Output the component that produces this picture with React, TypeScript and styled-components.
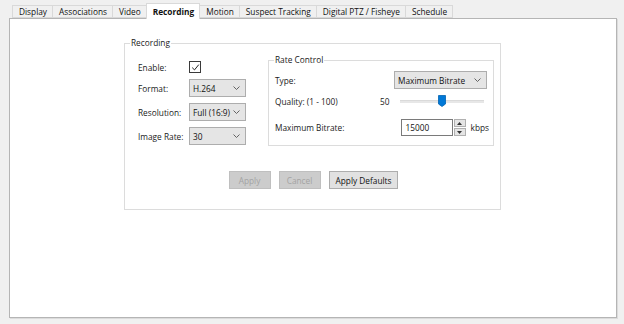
// Camera settings dialog - Recording tab

import { createGlobalStyle } from "styled-components";
import styled from "styled-components";

const GlobalStyle = createGlobalStyle`
  html, body {
    margin: 0;
    padding: 0;
    background: #f0f0f0;
  }
  body {
    font-family: "Open Sans", "Noto Sans", sans-serif;
    font-size: 8.3px;
    color: #1a1a1a;
  }
`;

const tabs = [
  "Display",
  "Associations",
  "Video",
  "Recording",
  "Motion",
  "Suspect Tracking",
  "Digital PTZ / Fisheye",
  "Schedule",
];

function Chevron() {
  return (
    <svg width="7" height="4" viewBox="0 0 7 4">
      <path d="M0.5 0.5 L3.5 3.5 L6.5 0.5" fill="none" stroke="#555" strokeWidth="0.9" />
    </svg>
  );
}

function Dropdown({ value, width }: { value: string; width: number }) {
  return (
    <Select $w={width}>
      <span>{value}</span>
      <Chevron />
    </Select>
  );
}

export default function App() {
  const active = "Recording";
  return (
    <Window>
      <GlobalStyle />
      <TabBar>
        {tabs.map((t) => (
          <Tab key={t} $active={t === active}>
            {t}
          </Tab>
        ))}
      </TabBar>
      <Panel>
        <Group $w={377}>
          <Legend $shift={-8}>Recording</Legend>
          <GroupBody>
            <FormGrid>
              <Label>Enable:</Label>
              <CheckBox>
                <svg width="9" height="9" viewBox="0 0 9 9">
                  <path d="M1.2 4.6 L3.5 6.9 L7.8 1.6" fill="none" stroke="#222" strokeWidth="1" />
                </svg>
              </CheckBox>
              <Label>Format:</Label>
              <Dropdown value="H.264" width={57} />
              <Label>Resolution:</Label>
              <Dropdown value="Full (16:9)" width={57} />
              <Label>Image Rate:</Label>
              <Dropdown value="30" width={57} />
            </FormGrid>
            <RateGroup $w={226}>
              <Legend $shift={-1}>Rate Control</Legend>
              <RateRow>
                <Label>Type:</Label>
                <Dropdown value="Maximum Bitrate" width={93} />
              </RateRow>
              <RateRow $gap={6}>
                <Label>Quality: (1 - 100)</Label>
                <SliderWrap>
                  <Value>50</Value>
                  <Track>
                    <Thumb style={{ left: `${(50 / 100) * 84 - 4}px` }}>
                      <svg width="8" height="12" viewBox="0 0 8 12">
                        <path d="M0.5 0.5 H7.5 V9 L4 11.5 L0.5 9 Z" fill="#0078d7" stroke="#0063b1" strokeWidth="0.8" />
                      </svg>
                    </Thumb>
                  </Track>
                </SliderWrap>
              </RateRow>
              <RateRow $gap={12}>
                <Label>Maximum Bitrate:</Label>
                <SpinWrap>
                  <NumberBox>15000</NumberBox>
                  <Spinner>
                    <SpinBtn>
                      <svg width="5" height="3" viewBox="0 0 5 3">
                        <path d="M0 3 L2.5 0 L5 3 Z" fill="#333" />
                      </svg>
                    </SpinBtn>
                    <SpinBtn>
                      <svg width="5" height="3" viewBox="0 0 5 3">
                        <path d="M0 0 L2.5 3 L5 0 Z" fill="#333" />
                      </svg>
                    </SpinBtn>
                  </Spinner>
                  <Unit>kbps</Unit>
                </SpinWrap>
              </RateRow>
            </RateGroup>
          </GroupBody>
          <ButtonRow>
            <Button disabled>Apply</Button>
            <Button disabled>Cancel</Button>
            <Button>Apply Defaults</Button>
          </ButtonRow>
        </Group>
      </Panel>
    </Window>
  );
}

const Window = styled.div`
  width: 624px;
  height: 324px;
  box-sizing: border-box;
  padding: 5px 0 0 9px;
`;

const TabBar = styled.div`
  display: flex;
  align-items: flex-end;
  height: 13px;
  margin-left: 4px;
  position: relative;
  z-index: 1;
`;

const Tab = styled.div<{ $active?: boolean }>`
  box-sizing: border-box;
  height: ${(p) => (p.$active ? "16px" : "13px")};
  margin-bottom: ${(p) => (p.$active ? "-1px" : "0")};
  padding: 0 5px ${(p) => (p.$active ? "1px" : "0")} 6px;
  margin-left: -1px;
  border: 1px solid #d9d9d9;
  border-bottom: ${(p) => (p.$active ? "none" : "1px solid #d9d9d9")};
  background: ${(p) => (p.$active ? "#ffffff" : "#f0f0f0")};
  font-weight: ${(p) => (p.$active ? 700 : 400)};
  color: #111;
  line-height: 11px;
  white-space: nowrap;
  display: flex;
  align-items: center;
`;

const Panel = styled.div`
  box-sizing: border-box;
  width: 608px;
  height: 300px;
  background: #ffffff;
  border: 1px solid #b5b5b5;
  box-shadow: 1px 1px 0 #dcdcdc;
  padding: 18px 0 0 114px;
`;

const Group = styled.fieldset<{ $w: number }>`
  box-sizing: border-box;
  width: ${(p) => p.$w}px;
  margin: 0;
  min-width: 0;
  border: 1px solid #dcdcdc;
  padding: 0 6px 20px 13px;
`;

const Legend = styled.legend<{ $shift: number }>`
  padding: 0 1px;
  margin-left: ${(p) => p.$shift}px;
  line-height: 12px;
  color: #1a1a1a;
`;

const GroupBody = styled.div`
  display: flex;
  justify-content: space-between;
  align-items: flex-start;
`;

const FormGrid = styled.div`
  display: grid;
  grid-template-columns: 51px 57px;
  grid-template-rows: 12px 18px 18px 18px;
  row-gap: 6px;
  align-items: center;
  padding-top: 12px;
`;

const Label = styled.span`
  white-space: nowrap;
  color: #1a1a1a;
`;

const CheckBox = styled.div`
  box-sizing: border-box;
  width: 12px;
  height: 12px;
  border: 1px solid #3a3a3a;
  background: #fff;
  display: flex;
  align-items: center;
  justify-content: center;
`;

const Select = styled.div<{ $w: number }>`
  box-sizing: border-box;
  width: ${(p) => p.$w}px;
  height: 18px;
  background: #e5e5e5;
  border: 1px solid #adadad;
  display: flex;
  align-items: center;
  justify-content: space-between;
  padding: 0 5px 0 3px;
  color: #111;
  white-space: nowrap;
`;

const RateGroup = styled.fieldset<{ $w: number }>`
  box-sizing: border-box;
  width: ${(p) => p.$w}px;
  margin: 5px 0 0 0;
  min-width: 0;
  border: 1px solid #dcdcdc;
  padding: 5px 6px 9px 6px;
  display: flex;
  flex-direction: column;
`;

const RateRow = styled.div<{ $gap?: number }>`
  display: flex;
  align-items: center;
  justify-content: space-between;
  margin-top: ${(p) => p.$gap ?? 0}px;
`;

const SliderWrap = styled.div`
  display: flex;
  align-items: center;
  height: 12px;
  margin-right: 3px;
`;

const Value = styled.span`
  width: 20px;
`;

const Track = styled.div`
  position: relative;
  width: 84px;
  height: 3px;
  background: #e7e7e7;
  border-top: 1px solid #dadada;
  box-sizing: border-box;
`;

const Thumb = styled.div`
  position: absolute;
  top: -6px;
  width: 8px;
  height: 12px;
  line-height: 0;
`;

const SpinWrap = styled.div`
  display: flex;
  align-items: center;
  height: 17px;
  margin-right: -2px;
`;

const NumberBox = styled.div`
  box-sizing: border-box;
  width: 52px;
  height: 17px;
  border: 1px solid #7a7a7a;
  background: #fff;
  padding-left: 4px;
  display: flex;
  align-items: center;
  color: #111;
`;

const Spinner = styled.div`
  display: flex;
  flex-direction: column;
  margin-left: 1px;
  gap: 1px;
`;

const SpinBtn = styled.div`
  box-sizing: border-box;
  width: 12px;
  height: 8px;
  background: #e5e5e5;
  border: 1px solid #b0b0b0;
  display: flex;
  align-items: center;
  justify-content: center;
`;

const Unit = styled.span`
  margin-left: 5px;
`;

const ButtonRow = styled.div`
  display: flex;
  justify-content: center;
  gap: 8px;
  margin-top: 25px;
  padding-right: 5px;
`;

const Button = styled.button`
  box-sizing: border-box;
  min-width: 42px;
  height: 18px;
  padding: 0 6px;
  font-family: inherit;
  font-size: 8.3px;
  border: 1px solid ${(p) => (p.disabled ? "#bfbfbf" : "#adadad")};
  background: ${(p) => (p.disabled ? "#cccccc" : "#e1e1e1")};
  color: ${(p) => (p.disabled ? "#a3a3a3" : "#111")};
`;
